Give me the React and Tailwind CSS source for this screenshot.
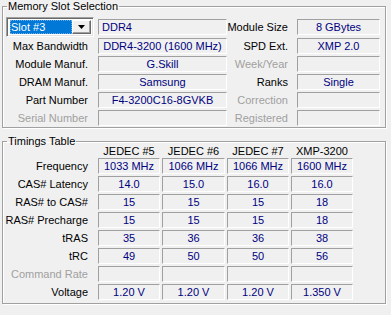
const font = "font-['Liberation_Sans',Arial,sans-serif]";

const groupBox =
  "border border-[#a0a0a0] shadow-[inset_1px_1px_0_#ffffff,1px_1px_0_#ffffff] ml-[2px] w-[384px]";

function Field({ children, left = false, className = "" }) {
  return (
    <div
      className={`h-[16px] border-t border-l border-t-[#a0a0a0] border-l-[#a0a0a0] border-b border-r border-b-white border-r-white text-[#000080] flex items-center whitespace-nowrap leading-none ${
        left ? "justify-start pl-[3px]" : "justify-center"
      } ${className}`}
    >
      {children}
    </div>
  );
}

function Label({ children, disabled = false, className = "" }) {
  return (
    <div
      className={`h-[16px] flex items-center justify-end whitespace-nowrap leading-none ${
        disabled ? "text-[#a0a0a0]" : "text-black"
      } ${className}`}
    >
      {children}
    </div>
  );
}

function SlotSelect() {
  return (
    <div className="ml-[3px] w-[88px] h-[20px] flex bg-white border-t border-l border-t-[#a0a0a0] border-l-[#a0a0a0] border-b border-r border-b-white border-r-white shadow-[inset_1px_1px_0_#696969,inset_-1px_-1px_0_#e3e3e3] p-[2px]">
      <div className="ml-[1px] w-[63px] h-full bg-[#0078d7] text-white flex items-center pl-[1px] leading-none outline outline-1 outline-dotted outline-[#6ea8e0] -outline-offset-1">
        Slot #3
      </div>
      <div className="ml-auto w-[19px] h-full bg-[#f0f0f0] border-t border-l border-t-white border-l-white border-b border-r border-b-[#696969] border-r-[#696969] shadow-[inset_-1px_-1px_0_#a0a0a0] flex items-center justify-center">
        <svg width="7" height="4" viewBox="0 0 7 4">
          <path d="M0 0h7L3.5 4z" fill="#000" />
        </svg>
      </div>
    </div>
  );
}

const slotRows = [
  ["Max Bandwidth", "DDR4-3200 (1600 MHz)", false, "SPD Ext.", "XMP 2.0", false],
  ["Module Manuf.", "G.Skill", false, "Week/Year", "", true],
  ["DRAM Manuf.", "Samsung", false, "Ranks", "Single", false],
  ["Part Number", "F4-3200C16-8GVKB", false, "Correction", "", true],
  ["Serial Number", "", true, "Registered", "", true],
];

const timingCols = ["JEDEC #5", "JEDEC #6", "JEDEC #7", "XMP-3200"];
const colW = ["w-[62px]", "w-[63px]", "w-[62px]", "w-[62px]"];

const timingRows = [
  ["Frequency", ["1033 MHz", "1066 MHz", "1066 MHz", "1600 MHz"]],
  ["CAS# Latency", ["14.0", "15.0", "16.0", "16.0"]],
  ["RAS# to CAS#", ["15", "15", "15", "18"]],
  ["RAS# Precharge", ["15", "15", "15", "18"]],
  ["tRAS", ["35", "36", "36", "38"]],
  ["tRC", ["49", "50", "50", "56"]],
  ["Command Rate", ["", "", "", ""], true],
  ["Voltage", ["1.20 V", "1.20 V", "1.20 V", "1.350 V"]],
];

export default function App() {
  return (
    <div className={`w-[391px] h-[315px] bg-[#f0f0f0] text-[11px] ${font} overflow-hidden`}>
      {/* Memory Slot Selection */}
      <fieldset className={`${groupBox} pt-[4px] pb-[1px]`}>
        <legend className="ml-[4px] px-[1px] leading-[13px] text-black">Memory Slot Selection</legend>
        <div className="flex items-center h-[20px]">
          <SlotSelect />
          <Field left className="ml-[4px] w-[129px]">DDR4</Field>
          <Label className="w-[61px]">Module Size</Label>
          <Field className="ml-[9px] w-[83px]">8 GBytes</Field>
        </div>
        {slotRows.map(([l1, v1, d1, l2, v2, d2], i) => (
          <div key={l1} className={`flex ${i === 0 ? "mt-[1px]" : "mt-[2px]"}`}>
            <Label disabled={d1} className="w-[85px]">{l1}</Label>
            <Field className="ml-[10px] w-[129px]">{v1}</Field>
            <Label disabled={d2} className="w-[61px]">{l2}</Label>
            <Field className="ml-[9px] w-[83px]">{v2}</Field>
          </div>
        ))}
      </fieldset>

      {/* Timings Table */}
      <fieldset className={`${groupBox} mt-[7px] pb-[3px]`}>
        <legend className="ml-[4px] px-[1px] leading-[13px] text-black">Timings Table</legend>
        <div className="flex -mt-[4px] h-[14px] items-center">
          <div className="w-[85px]" />
          <div className="ml-[10px] flex gap-[2px]">
            {timingCols.map((c, i) => (
              <div key={c} className={`${colW[i]} text-center text-black leading-none`}>{c}</div>
            ))}
          </div>
        </div>
        {timingRows.map(([label, vals, disabled], r) => (
          <div key={label} className={`flex ${r === 0 ? "mt-0" : "mt-[2px]"}`}>
            <Label disabled={disabled} className="w-[85px]">{label}</Label>
            <div className="ml-[10px] flex gap-[2px]">
              {vals.map((v, i) => (
                <Field key={i} className={colW[i]}>{v}</Field>
              ))}
            </div>
          </div>
        ))}
      </fieldset>
    </div>
  );
}
